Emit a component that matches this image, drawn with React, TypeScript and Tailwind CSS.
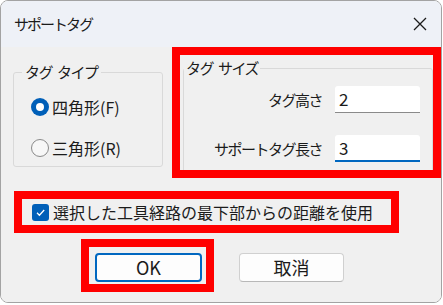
import React, { FC } from 'react';

const font = { fontFamily: '"Noto Sans CJK JP", "Noto Sans", sans-serif' };

const Radio: FC<{ checked?: boolean; label: string }> = ({ checked, label }) => (
  <div className="flex items-center h-[20px]">
    {checked ? (
      <span className="w-[18px] h-[18px] rounded-full bg-[#005fb8] flex items-center justify-center">
        <span className="w-[8px] h-[8px] rounded-full bg-white" />
      </span>
    ) : (
      <span className="w-[18px] h-[18px] rounded-full border border-[#8a8a8a] bg-[#f7f7f7]" />
    )}
    <span className="ml-[3px] text-[16px] leading-[20px] text-[#1b1b1b]">{label}</span>
  </div>
);

const Field: FC<{ label: string; value: string; focused?: boolean }> = ({ label, value, focused }) => (
  <div className="flex items-center">
    <span className="w-[138px] text-right text-[15px] tracking-[-1.5px] leading-[20px] text-[#1b1b1b]">{label}</span>
    <div
      className={
        'ml-[13px] w-[85px] h-[27px] bg-white rounded-t-[3px] flex items-center pl-[4px] text-[17px] text-[#1b1b1b] ' +
        (focused ? 'border-b-2 border-[#0067c0]' : 'border-b border-[#8a8a8a]')
      }
    >
      {value}
    </div>
  </div>
);

const App: FC = () => {
  return (
    <div className="w-[443px] h-[305px] bg-white" style={font}>
      <div className="w-[442px] h-[303px] rounded-[8px] border border-[#a3a3a3] overflow-hidden flex flex-col">
        <div className="h-[46px] bg-[#eef1f7] flex items-center justify-between pl-[13px] pr-[14px] shrink-0">
          <span className="text-[15px] tracking-[-2px] text-[#1b1b1b]">サポートタグ</span>
          <svg width="14" height="14" viewBox="0 0 14 14">
            <path d="M1 1 L13 13 M13 1 L1 13" stroke="#1b1b1b" strokeWidth="1.3" />
          </svg>
        </div>
        <div className="flex-1 bg-[#f0f0f0] flex flex-col">
          <div className="flex items-start">
            <fieldset className="ml-[12px] mt-[15px] w-[150px] h-[105px] border border-[#d9d9d9] rounded-[3px] px-[8px]">
              <legend className="px-[3px] text-[15px] tracking-[-1.5px] leading-[20px] text-[#1b1b1b]">
                タグ<span className="ml-[5px]">タイプ</span>
              </legend>
              <div className="flex flex-col gap-[21px] mt-[15px] ml-[9px]">
                <Radio checked label="四角形(F)" />
                <Radio label="三角形(R)" />
              </div>
            </fieldset>
            <div className="ml-[9px] w-[269px] h-[131px] border-[8px] border-[#ff0000] overflow-hidden">
              <fieldset className="ml-[3px] mt-[3px] w-[250px] h-[140px] border border-[#d9d9d9] rounded-[3px]">
                <legend className="px-[2px] text-[15px] tracking-[-1.5px] leading-[20px] text-[#1b1b1b]">
                  タグ<span className="ml-[5px]">サイズ</span>
                </legend>
                <div className="flex flex-col gap-[22px] mt-[8px]">
                  <Field label="タグ高さ" value="2" />
                  <Field label="サポートタグ長さ" value="3" focused />
                </div>
              </fieldset>
            </div>
          </div>
          <div className="ml-[13px] mt-[13px] w-[385px] h-[42px] border-[8px] border-[#ff0000] flex items-center pl-[10px]">
            <span className="w-[17px] h-[17px] rounded-[3px] bg-[#005fb8] flex items-center justify-center">
              <svg width="11" height="11" viewBox="0 0 11 11">
                <path d="M2 5.8 L4.4 8.2 L9.2 3" fill="none" stroke="white" strokeWidth="1.3" />
              </svg>
            </span>
            <span className="ml-[4px] text-[16px] leading-[20px] text-[#1b1b1b]">選択した工具経路の最下部からの距離を使用</span>
          </div>
          <div className="flex items-start mt-[6px]">
            <div className="ml-[80px] w-[133px] h-[53px] border-[8px] border-[#ff0000] pl-[6px] pt-[6px]">
              <button className="w-[107px] h-[29px] bg-[#fdfdfd] border-2 border-[#0067c0] rounded-[4px] text-[18px] text-[#1b1b1b] flex items-center justify-center">
                OK
              </button>
            </div>
            <button className="ml-[25px] mt-[14px] w-[105px] h-[29px] bg-[#fdfdfd] border border-[#d0d0d0] border-b-[#b8b8b8] rounded-[4px] text-[18px] text-[#1b1b1b] flex items-center justify-center">
              取消
            </button>
          </div>
        </div>
      </div>
    </div>
  );
};

export default App;
